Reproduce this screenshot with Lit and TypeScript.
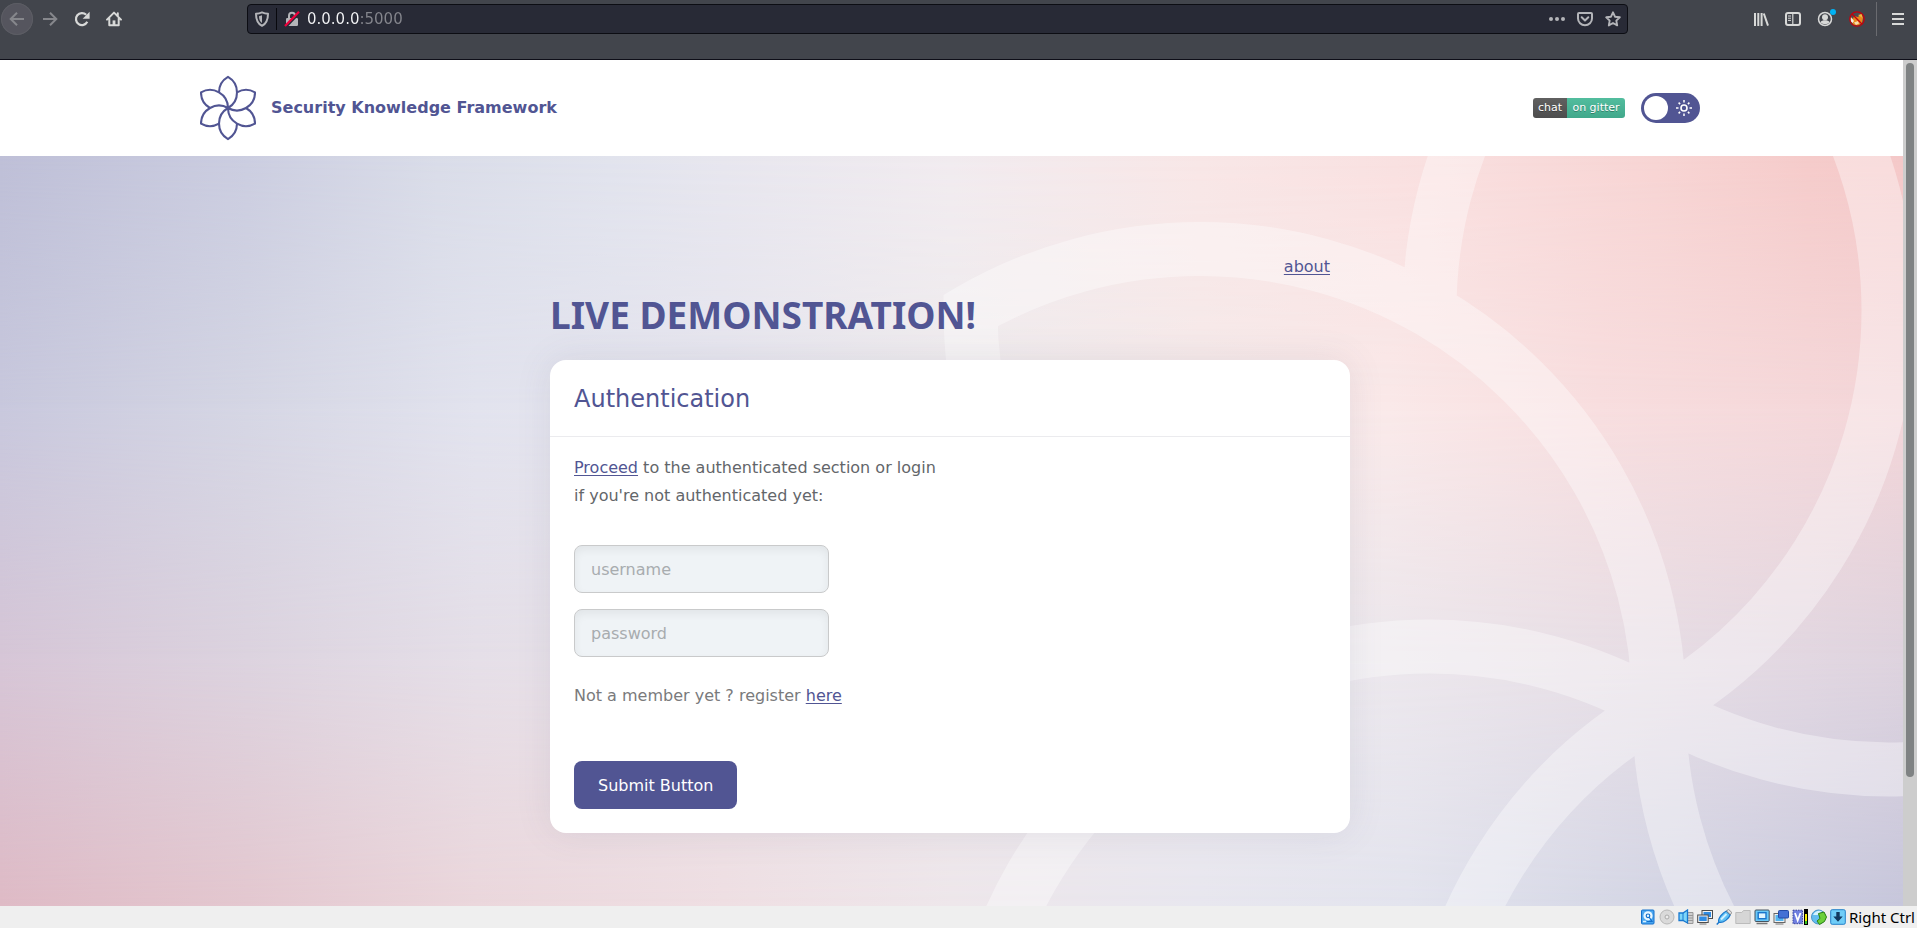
import { LitElement, html, css, svg } from "lit";
import { customElement, property } from "lit/decorators.js";

/** Outline of the six-petal flower: every petal is built from arcs of equal circles set on a hexagon. */
function flowerPath(cx: number, cy: number, r: number): string {
  const rad = Math.PI / 180;
  const point = (x: number, y: number, a: number) =>
    `${(x + r * Math.cos(a * rad)).toFixed(2)} ${(y + r * Math.sin(a * rad)).toFixed(2)}`;
  let d = "";
  for (let t = 0; t < 360; t += 60) {
    const x = cx + r * Math.cos(t * rad);
    const y = cy + r * Math.sin(t * rad);
    d += `M${point(x, y, t + 180)}A${r} ${r} 0 0 0 ${point(x, y, t + 60)}`;
    // short outer edge, from the petal tip to the neighbouring petal
    const nx = cx + r * Math.cos((t + 60) * rad);
    const ny = cy + r * Math.sin((t + 60) * rad);
    d += `A${r} ${r} 0 0 0 ${point(nx, ny, t - 60)}`;
  }
  return d;
}

const icons = {
  back: svg`<path d="M15 8H2M8 1.700 1.700 8 8 14.300" fill="none" stroke="currentColor" stroke-width="2"/>`,
  forward: svg`<path d="M1 8h13M8 1.700 14.300 8 8 14.300" fill="none" stroke="currentColor" stroke-width="2"/>`,
  reload: svg`<path d="M13.3 10.8A6 6 0 1 1 12.2 3.8" fill="none" stroke="currentColor" stroke-width="2.2"/><path d="M15.600 .8v7H8.600z" fill="currentColor"/>`,
  home: svg`<path d="M1 8.6 8 1.6l7 7M3.3 7.6v6.6h9.4V7.6M11.8 5V2.2" fill="none" stroke="currentColor" stroke-width="2" stroke-linejoin="round" stroke-linecap="round"/><path d="M6.6 14V9.4h2.8V14z" fill="currentColor"/>`,
  shield: svg`<path d="M8 1.4c2 .9 3.900 1.300 6 1.300 0 5.300-.900 9.600-6 12.100C2.900 12.300 2 8 2 2.700c2.100 0 4-.400 6-1.300z" fill="none" stroke="currentColor" stroke-width="2" stroke-linejoin="round"/><path d="M8 4.300v7.600C5.700 10.500 5.100 8.200 5 5.200 6.100 5.100 7 4.800 8 4.300z" fill="currentColor"/>`,
  insecure: svg`<path d="M5 8V4.800a3 3 0 0 1 6 0V8" fill="none" stroke="currentColor" stroke-width="2"/><rect x="2" y="7" width="12" height="8" rx="1.200" fill="currentColor"/><path d="M2.500 15.500 15.500 2" stroke="#282a36" stroke-width="2"/><path d="M1 15 15 .8" stroke="#f0003c" stroke-width="2.200"/>`,
  dots: svg`<g fill="currentColor"><circle cx="2" cy="8" r="2"/><circle cx="8" cy="8" r="2"/><circle cx="14" cy="8" r="2"/></g>`,
  pocket: svg`<path d="M2 2h12a1 1 0 0 1 1 1v4.600a7 6.600 0 0 1-14 0V3a1 1 0 0 1 1-1z" fill="none" stroke="currentColor" stroke-width="2"/><path d="M4.700 6.300 8 9.500l3.300-3.200" fill="none" stroke="currentColor" stroke-width="2" stroke-linecap="round" stroke-linejoin="round"/>`,
  star: svg`<path d="M8 1.300 10 5.700l4.800.6-3.500 3.300.9 4.800L8 12l-4.200 2.400.9-4.800L1.200 6.300 6 5.700z" fill="none" stroke="currentColor" stroke-width="1.900" stroke-linejoin="round"/>`,
  library: svg`<path d="M2 2v13M5.300 2v13M8.600 2v13M10.800 2.500 15 14.600" fill="none" stroke="currentColor" stroke-width="2"/>`,
  sidebar: svg`<rect x="1" y="2" width="14" height="12" rx="2" fill="none" stroke="currentColor" stroke-width="2"/><path d="M7.800 2v12" stroke="currentColor" stroke-width="1.200"/><path d="M3 5h3M3 7.200h3M3 9.400h3" stroke="currentColor" stroke-width="1"/>`,
  account: svg`<circle cx="8" cy="8" r="6.500" fill="none" stroke="currentColor" stroke-width="1.500"/><circle cx="8" cy="6.200" r="3" fill="currentColor"/><path d="M3.500 11.300c1.200-2.600 7.800-2.600 9 0-1.800 2.600-7.200 2.600-9 0z" fill="currentColor"/><circle cx="16" cy="1" r="3" fill="#00b3f4"/>`,
  fox: svg`<circle cx="8" cy="8" r="7" fill="#4a4a50"/><path d="M1.500 5.500 4 8l1-3 4 1 3-3 2 4-1 5-4 2.500-5-1z" fill="#e8891c"/><path d="M1.500 6v4l2 2 1.500-2-1.500-2z" fill="#f5ede0"/><path d="M5 11.500l4-1.500 1 2.500-3 1.500z" fill="#f7dcae"/><path d="M9 4l4-1 .5 4z" fill="#f7b43a"/><circle cx="8" cy="8" r="7.200" fill="none" stroke="#c4000c" stroke-width="1.300"/><path d="M3 3l10.200 10.200" stroke="#c4000c" stroke-width="1.300"/>`,
  menu: svg`<path d="M2 3h12M2 8h12M2 13h12" stroke="currentColor" stroke-width="2"/>`,
  sun: svg`<circle cx="8" cy="8" r="3" fill="none" stroke="currentColor" stroke-width="1.600"/><path d="M8 0v2.500M8 13.500V16M0 8h2.500M13.500 8H16M2.600 2.600l1.500 1.500M11.900 11.900l1.500 1.500M13.400 2.600l-1.500 1.500M4.100 11.900l-1.500 1.500" stroke="currentColor" stroke-width="1.500"/>`,
};

const trayIcons: [string, unknown][] = [
  ["Hard disks", svg`<rect x="1.500" y="1" width="12.500" height="14" rx="1" fill="#4aa6f0" stroke="#1470cc"/><circle cx="8" cy="6.800" r="4.600" fill="#e9f7ff"/><circle cx="8" cy="6.800" r="1.800" fill="none" stroke="#1470cc" stroke-width="1.200"/><path d="M9 8l3 4.500H7" fill="none" stroke="#1470cc" stroke-width="1.200"/><path d="M3 12.500h3" stroke="#d8f0ff" stroke-width="1.500"/>`],
  ["Optical drives", svg`<circle cx="8" cy="8" r="7" fill="#dadada" stroke="#b8b8b8"/><circle cx="8" cy="8" r="2" fill="#ececec" stroke="#aaa"/>`],
  ["Audio", svg`<path d="M9.500 3.500h5.500v11h-5.500zM9.500 6.500h5.500M9.500 9h5.500M9.500 11.500h5.500" fill="#cfcfcf" stroke="#999"/><path d="M1 4h4l4.500-3v13L5 11.500H1z" fill="#7dd6f9" stroke="#1878d0" stroke-width="1.300"/><path d="M5 4v7.500" stroke="#1878d0"/>`],
  ["Network", svg`<rect x="5" y="1.500" width="10.500" height="8" fill="#f2f2f2" stroke="#4c4c4c"/><rect x="6.500" y="3" width="7.500" height="5" fill="#2e8ce4"/><rect x=".7" y="6" width="10.500" height="7.500" fill="#f2f2f2" stroke="#4c4c4c"/><rect x="2.200" y="7.500" width="7.500" height="4.500" fill="#2e8ce4"/><path d="M2.500 15h7" stroke="#777"/>`],
  ["USB", svg`<path d="M2.800 13.200C1.500 9 7 3.500 10.500 2l3.800 3.800C13 9.500 7.500 14.500 2.800 13.200z" fill="#5fc1f5" stroke="#1976cc" stroke-width="1.200"/><path d="M5 10.500 10.500 5" stroke="#d3f0ff" stroke-width="2"/><path d="M.7 15.500l2.500-2.500" stroke="#1976cc" stroke-width="1.500"/><path d="m10.500 2 2-1.700 3.300 3.200-1.500 2.300z" fill="#e2e2e2" stroke="#777" stroke-width=".8"/>`],
  ["Shared folders", svg`<path d="M.8 3.500h6L8.500 1.500h6.700v13H.8z" fill="#d6d6d6" stroke="#bbb"/>`],
  ["Display", svg`<rect x="1" y="1" width="14.200" height="11.500" rx="1" fill="#69c8f8" stroke="#46535f"/><rect x="4.200" y="3.700" width="7.800" height="6" fill="#e0f5ff" stroke="#1976cc" stroke-width="1.400"/><path d="M2.500 14.500h11" stroke="#777" stroke-width="1.500"/>`],
  ["Recording", svg`<rect x="1" y="4.500" width="11" height="9" fill="#f0f0f0" stroke="#666"/><rect x="2.500" y="6" width="8" height="6" fill="#52b5ef"/><rect x="5.500" y="1.500" width="10" height="7.500" rx="1" fill="#4370d4" stroke="#234aa6"/><path d="M2.500 15h8" stroke="#777"/>`],
  ["CPU", svg`<rect x="1" y="1.200" width="9.500" height="13.500" fill="#6f7fe0" stroke="#3a449c" stroke-dasharray="1.500 1"/><path d="M3 4 5.700 11.500 8.500 4" fill="none" stroke="#fff" stroke-width="1.800"/><path d="M12 0h4v16h-4z" fill="#000"/><path d="M13 5h2v10h-2z" fill="#f4ee00"/><path d="M13 12h2v3h-2z" fill="#36c322"/>`],
  ["Mouse integration", svg`<circle cx="7.500" cy="8" r="7" fill="#62bdf0" stroke="#4a94c8"/><path d="M2 6c2-4.500 7-5 9-3.500L6.500 6z" fill="#d5f2ff"/><path d="M7.500 4.500 13 3l2.500 5-2 4.500-5 3L6 12l3-2.500z" fill="#6bd03a" stroke="#2c8112"/>`],
  ["Keyboard capture", svg`<rect x=".7" y=".7" width="14.600" height="14.600" rx="1.500" fill="#6fcdf8" stroke="#2480c8"/><path d="M6.300 3h3.400v4.500h3L8 12.800 3.300 7.500h3z" fill="#12395f"/>`],
];

@customElement("browser-toolbar")
export class BrowserToolbar extends LitElement {
  static styles = css`
    :host {
      display: flex;
      height: 60px;
      box-sizing: border-box;
      padding-top: 3px;
      align-items: flex-start;
      background: #42454c;
      color: #d8d9d8;
      border-bottom: 1px solid #0e0e18;
      flex: none;
    }
    .nav, .tools, .address { display: flex; align-items: center; height: 32px; }
    .nav { width: 247px; padding-left: 1px; box-sizing: border-box; }
    .tools { width: 289px; justify-content: flex-end; box-sizing: border-box; padding-right: 3px; }
    button {
      display: grid;
      place-items: center;
      width: 32px;
      height: 32px;
      padding: 0;
      border: 0;
      background: none;
      color: inherit;
    }
    button svg { width: 16px; height: 16px; overflow: visible; display: block; }
    .dim { color: #86878c; }
    .round { border-radius: 50%; background: #55555e; box-shadow: 0 0 0 1px #5c5d64 inset; margin-right: 1px; }
    .address {
      flex: 1;
      height: 30px;
      margin-top: 1px;
      box-sizing: border-box;
      border: 1px solid #0c0d13;
      border-radius: 4px;
      background: #282a36;
      color: #b4b5b9;
      padding-left: 6px;
    }
    .address .small { width: 16px; height: 24px; }
    .address .split { width: 1px; height: 22px; background: #08080d; margin: 0 7px 0 6px; }
    .address .url {
      flex: 1;
      min-width: 0;
      height: 24px;
      padding: 0;
      margin-left: 7px;
      border: 0;
      outline: 0;
      font-family: "DejaVu Sans", sans-serif;
      font-size: 15px;
      color: transparent;
      background: linear-gradient(90deg, #f4f5f7 52px, #85868d 52px);
      -webkit-background-clip: text;
      background-clip: text;
    }
    .address .action { width: 28px; height: 28px; }
    .rule { width: 1px; height: 34px; background: #6a6b70; margin: 0 5px 0 3px; }
  `;
  private button(name: keyof typeof icons, label: string, cls = "") {
    return html`<button class=${cls} type="button" aria-label=${label}><svg viewBox="0 0 16 16">${icons[name]}</svg></button>`;
  }
  render() {
    return html`
      <div class="nav">
        ${this.button("back", "Back", "dim round")}
        ${this.button("forward", "Forward", "dim")}
        ${this.button("reload", "Reload")}
        ${this.button("home", "Home")}
      </div>
      <div class="address">
        ${this.button("shield", "Tracking protection", "small")}
        <span class="split"></span>
        ${this.button("insecure", "Connection is not secure", "small")}
        <input class="url" type="text" aria-label="Address" value="0.0.0.0:5000" />
        ${this.button("dots", "Page actions", "action")}
        ${this.button("pocket", "Save to Pocket", "action")}
        ${this.button("star", "Bookmark", "action")}
      </div>
      <div class="tools">
        ${this.button("library", "Library")}
        ${this.button("sidebar", "Sidebars")}
        ${this.button("account", "Account")}
        ${this.button("fox", "Proxy")}
        <span class="rule"></span>
        ${this.button("menu", "Menu")}
      </div>
    `;
  }
}

@customElement("site-header")
export class SiteHeader extends LitElement {
  static styles = css`
    :host { display: block; background: #fff; flex: none; padding-right: 3px; }
    .inner {
      display: flex;
      align-items: center;
      max-width: 1500px;
      height: 96px;
      margin: 0 auto;
      color: #515593;
    }
    .logo { width: 56px; height: 66px; display: block; margin-right: 15px; }
    .name { font-size: 16px; font-weight: 700; line-height: 24px; margin-right: auto; }
    .badge {
      display: flex;
      height: 20px;
      border-radius: 3px;
      overflow: hidden;
      font-size: 11px;
      line-height: 20px;
      color: #fff;
      text-decoration: none;
      text-shadow: 0 1px 0 rgba(1, 1, 1, 0.3);
      margin-right: 16px;
    }
    .badge span { text-align: center; }
    .chat { width: 34px; background: linear-gradient(#606060, #4d4d4d); }
    .gitter { width: 58px; background: linear-gradient(#52bd9e, #41a88b); }
    .toggle { display: grid; width: 59px; height: 30px; align-items: center; color: #fff; }
    .toggle > * { grid-area: 1 / 1; }
    .toggle input { appearance: none; width: 59px; height: 30px; margin: 0; border-radius: 15px; background: #515593; }
    .knob { width: 24px; height: 24px; border-radius: 50%; background: #fff; margin-left: 3px; }
    .toggle svg { width: 16px; height: 16px; justify-self: end; margin-right: 8px; }
  `;
  render() {
    return html`
      <div class="inner">
        <svg class="logo" viewBox="0 0 56 66" aria-hidden="true">
          <path d=${flowerPath(28, 33, 18)} fill="none" stroke="#515593" stroke-width="2.1" stroke-linejoin="round" />
        </svg>
        <span class="name">Security Knowledge Framework</span>
        <a class="badge" href="#gitter"><span class="chat">chat</span><span class="gitter">on gitter</span></a>
        <label class="toggle" aria-label="Dark theme">
          <input type="checkbox" role="switch" />
          <span class="knob"></span>
          <svg viewBox="0 0 16 16" aria-hidden="true">${icons.sun}</svg>
        </label>
      </div>
    `;
  }
}

@customElement("petal-backdrop")
export class PetalBackdrop extends LitElement {
  static styles = css`
    :host { display: flex; flex-direction: column; overflow: hidden; background: #ece6ed; }
    .band {
      flex: 1;
      display: flex;
      background: var(--below);
      --row0: linear-gradient(90deg, #bebfd7, #cbcde0 13%, #d9dce8 23%, #e1e3ed 32%, #e7e6ee 38%, #f1ebef 50%, #f8e6e6 63%, #f9dfdf 75%, #f7d4d3 87%, #f5cbca 95%, #f4c8c8);
      --row1: linear-gradient(90deg, #c8c8dd, #d5d6e4 13%, #e2e3ee 25%, #e7e6ef 38%, #efecee 50%, #f6ebeb 63%, #fae9e9 73%, #f8dedf 84%, #f5d8da 95%, #f3d5d8);
      --row2: linear-gradient(90deg, #d6c6d7, #dcd3df 13%, #e5dfe8 25%, #eae3e9 38%, #efe9ed 60%, #ede9ee 71%, #e8dfe6 84%, #e2d7e1 95%, #ded3de);
      --row3: linear-gradient(90deg, #dfbbc6, #e4c8d0 13%, #ebd7dc 25%, #efdfe3 38%, #eee7eb 50%, #e8e7ef 63%, #e3e4ee 74%, #d7d9e7 84%, #cccde0 95%, #c7c7dc);
    }
    .band::before {
      content: "";
      flex: 1;
      background: var(--above);
      -webkit-mask-image: linear-gradient(#000, transparent);
      mask-image: linear-gradient(#000, transparent);
    }
    .top { --above: var(--row0); --below: var(--row1); }
    .middle { --above: var(--row1); --below: var(--row2); }
    .bottom { --above: var(--row2); --below: var(--row3); }
    svg { position: absolute; inset: 0; width: 100%; height: 100%; }
  `;
  render() {
    return html`
      <div class="band top"></div>
      <div class="band middle"></div>
      <div class="band bottom"></div>
      <svg viewBox="0 0 1903 750" preserveAspectRatio="xMaxYMid slice" aria-hidden="true">
        <path d=${flowerPath(1659, 552, 459)} fill="none" stroke="#fff" stroke-opacity="0.37" stroke-width="54" />
      </svg>
    `;
  }
}

@customElement("login-card")
export class LoginCard extends LitElement {
  static styles = css`
    :host {
      display: block;
      background: #fff;
      border-radius: 16px;
      box-shadow: 0 0 36px rgba(80, 80, 110, 0.1);
      color: #63666a;
    }
    .title {
      margin: 0;
      padding: 24px 24px 22px;
      border-bottom: 1px solid #ebebee;
      font-size: 24px;
      line-height: 30px;
      font-weight: 400;
      color: #515593;
    }
    .body { display: flex; flex-direction: column; align-items: flex-start; padding: 17px 24px 24px; margin: 0; }
    p { margin: 0; line-height: 28px; }
    a { color: #515593; text-decoration: underline 1px; text-underline-offset: 2px; text-decoration-skip-ink: none; }
    .fields { display: grid; gap: 16px; margin: 35px 0 25px; }
    .field {
      width: 255px;
      height: 48px;
      box-sizing: border-box;
      padding: 0 16px;
      border: 1px solid #c9cacb;
      border-radius: 8px;
      background: #eff3f6;
      box-shadow: inset 0 4px 8px rgba(0, 0, 0, 0.06);
      font: inherit;
      color: #444;
    }
    .field::placeholder { color: #a8acaf; opacity: 1; }
    .member { color: #7a7a7c; margin-bottom: 51px; }
    .submit {
      height: 48px;
      padding: 0 24px;
      border: 0;
      border-radius: 8px;
      background: #515593;
      color: #fff;
      font: inherit;
    }
  `;
  render() {
    return html`
      <h2 class="title">Authentication</h2>
      <form class="body" @submit=${(e: Event) => e.preventDefault()}>
        <p><a href="#proceed">Proceed</a> to the authenticated section or login<br />if you're not authenticated yet:</p>
        <div class="fields">
          <input class="field" type="text" name="username" placeholder="username" aria-label="username" />
          <input class="field" type="password" name="password" placeholder="password" aria-label="password" />
        </div>
        <p class="member">Not a member yet ? register <a href="#register">here</a></p>
        <button class="submit" type="submit">Submit Button</button>
      </form>
    `;
  }
}

@customElement("vm-statusbar")
export class VmStatusbar extends LitElement {
  @property() hostKey = "Right Ctrl";
  static styles = css`
    :host {
      display: flex;
      justify-content: flex-end;
      align-items: center;
      gap: 3px;
      height: 22px;
      flex: none;
      padding-right: 2px;
      background: #efefef;
      color: #000;
      font: 15px/20px "Noto Sans", sans-serif;
    }
    svg { width: 16px; height: 16px; display: block; }
  `;
  render() {
    return html`${trayIcons.map(([label, art]) => html`<svg viewBox="0 0 16 16" role="img" aria-label=${label}>${art}</svg>`)}<span>${this.hostKey}</span>`;
  }
}

@customElement("app-root")
export class AppRoot extends LitElement {
  static styles = css`
    :host {
      display: flex;
      flex-direction: column;
      min-height: 100vh;
      font-family: "DejaVu Sans", sans-serif;
      font-size: 16px;
      color: #515593;
    }
    .viewport { flex: 1; display: flex; }
    .page { flex: 1; display: flex; flex-direction: column; min-width: 0; }
    .hero { flex: 1; position: relative; padding: 97px 3px 72px 0; }
    .backdrop { position: absolute; inset: 0; }
    .content { position: relative; max-width: 800px; margin: 0 auto; }
    .links { display: flex; justify-content: flex-end; padding-right: 20px; line-height: 28px; }
    .links a { color: inherit; text-decoration: underline 1px; text-underline-offset: 2px; }
    h1 { margin: 10px 0 21px; font: 700 37px/48px "Noto Sans", sans-serif; }
    .scrollbar { width: 14px; box-sizing: border-box; padding: 3px; background: #cdcdcd; }
    .thumb { width: 8px; height: 85%; border-radius: 4px; background: #7f8283; }
  `;
  render() {
    return html`
      <browser-toolbar></browser-toolbar>
      <div class="viewport">
        <div class="page">
          <site-header></site-header>
          <main class="hero">
            <petal-backdrop class="backdrop"></petal-backdrop>
            <div class="content">
              <nav class="links"><a href="#about">about</a></nav>
              <h1>LIVE DEMONSTRATION!</h1>
              <login-card></login-card>
            </div>
          </main>
        </div>
        <div class="scrollbar"><div class="thumb"></div></div>
      </div>
      <vm-statusbar></vm-statusbar>
    `;
  }
}
